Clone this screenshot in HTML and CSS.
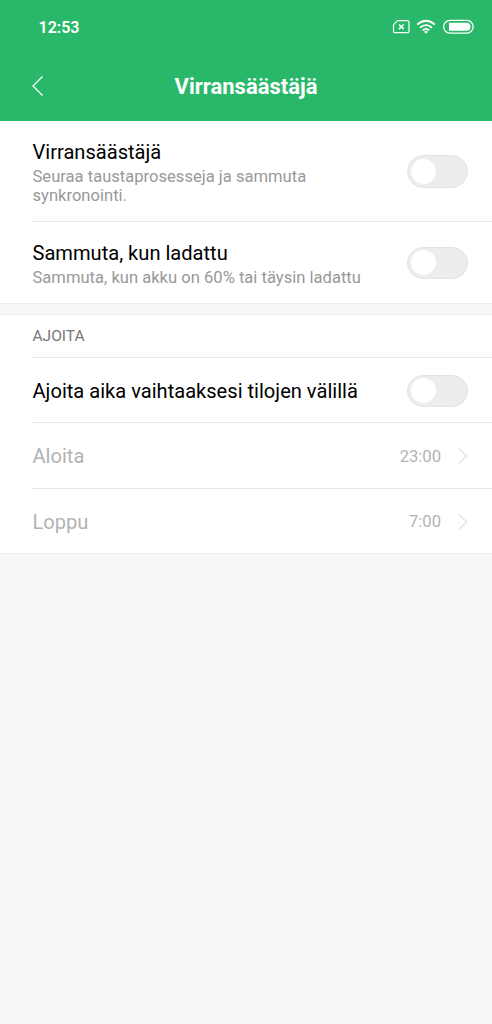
FILE: index.html
```html
<!DOCTYPE html>
<html lang="fi"><head><meta charset="utf-8"><title>Virransäästäjä</title><link rel="stylesheet" href="styles.css"></head>
<body>
<header class="header">
  <div class="status"><span class="clock">12:53</span>
    <svg class="status-icons" width="82" height="18" viewBox="0 0 82 18" fill="none" stroke="#fff">
      <path d="M5.500 2.700H15.500a1.500 1.500 0 0 1 1.500 1.500v9a1.500 1.500 0 0 1-1.500 1.500H3a1.500 1.500 0 0 1-1.500-1.500V6.700z" stroke-width="1.200"/>
      <path d="M7 6.500l4.600 4.600m0-4.600l-4.600 4.600" stroke-width="1.500"/>
      <path d="M25.200 6.600q8.800-7.600 17.600 0M28 9.700q6-5.200 12 0M30.700 12.400q3.300-2.800 6.600 0" stroke-width="1.800"/><path d="M32 13.700l2 2 2-2q-2-1.500-4 0z" fill="#fff" stroke="none"/>
      <rect x="51.600" y="2.400" width="29.600" height="12.800" rx="6.400" stroke-width="1.300"/><path d="M57 4.700h17.500a4 4 0 0 1 0 8H57z" fill="#fff" stroke="none"/>
    </svg>
  </div>
  <div class="title-bar"><svg class="back" width="14" height="22" viewBox="0 0 14 22"><path d="M10.500 1.500L1 11l9.500 9.500" fill="none" stroke="#fff" stroke-width="1.300"/></svg><h1 class="title">Virransäästäjä</h1></div>
</header>
<main>
  <section class="group">
    <div class="row row-first"><div class="copy"><div class="label">Virransäästäjä</div><div class="note">Seuraa taustaprosesseja ja sammuta synkronointi.</div></div><span class="switch"></span></div>
    <div class="row row-second"><div class="copy"><div class="label">Sammuta, kun ladattu</div><div class="note">Sammuta, kun akku on 60% tai täysin ladattu</div></div><span class="switch"></span></div>
  </section>
  <section class="group">
    <h2 class="section-title">AJOITA</h2>
    <div class="row row-single"><div class="label">Ajoita aika vaihtaaksesi tilojen välillä</div><span class="switch"></span></div>
    <div class="row row-single disabled"><div class="label">Aloita</div><span class="value">23:00</span><svg class="chevron" width="10" height="18" viewBox="0 0 10 18"><path d="M1 1.500l7.800 7.500-7.800 7.500" fill="none" stroke="#e2e2e2" stroke-width="1.200"/></svg></div>
    <div class="row row-single disabled"><div class="label">Loppu</div><span class="value">7:00</span><svg class="chevron" width="10" height="18" viewBox="0 0 10 18"><path d="M1 1.500l7.800 7.500-7.800 7.500" fill="none" stroke="#e2e2e2" stroke-width="1.200"/></svg></div>
  </section>
</main>
</body></html>
```
FILE: styles.css
```css
* { box-sizing: border-box; }
body { margin: 0; min-height: 1024px; background: #f7f7f7; font-family: Roboto, sans-serif; color: #000; }
.header { height: 121px; background: #29b869; color: #fff; }
.status { height: 54px; padding: 0 18px 0 38.500px; display: flex; align-items: center; justify-content: space-between; }
.clock { font-size: 16px; font-weight: 600; }
.title-bar { height: 64px; padding: 0 32px; display: grid; grid-template-columns: 14px 1fr 14px; align-items: center; }
.title { margin: 0; text-align: center; font-size: 22px; font-weight: 700; }
.group { background: #fff; border-bottom: 1px solid #ececec; }
.group + .group { margin-top: 10px; border-top: 1px solid #f1f1f1; }
.row { height: 65.500px; padding: 1px 24px 0 32.500px; display: flex; align-items: center; position: relative; }
.row + .row::before, .section-title + .row::before { content: ""; position: absolute; top: 0; left: 32px; right: 0; height: 1px; background: #e9e9e9; }
.row-first { height: 100px; }
.row-second { height: 82px; }
.row-single { padding-top: 3px; }
.copy { width: 340px; padding-top: 1px; }
.row-first .copy { width: 320px; }
.label { font-size: 20.100px; line-height: 26px; white-space: nowrap; }
.note { font-size: 16.580px; line-height: 19px; color: #999; margin-top: 2px; }
.switch { width: 61px; height: 32px; padding: 2.500px 3px; margin-left: auto; border: 1px solid #e2e2e2; border-radius: 17px; background: #ededed; flex: none; }
.row-first .switch { height: 33px; padding: 3px; }
.switch::before { content: ""; display: block; width: 25px; height: 25px; border-radius: 50%; background: #fff; }
.section-title { margin: 0; height: 41.500px; padding-left: 32.500px; line-height: 42px; font-size: 15.500px; font-weight: 400; color: #777; }
.disabled { color: #b3b3b3; }
.value { margin-left: auto; font-size: 16.600px; }
.chevron { margin-left: 17px; }
```
